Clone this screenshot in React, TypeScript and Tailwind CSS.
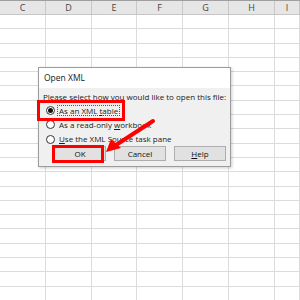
const cols = [
  { label: 'C', w: 'w-[46px]' },
  { label: 'D', w: 'w-[46px]' },
  { label: 'E', w: 'w-[45px]' },
  { label: 'F', w: 'w-[46px]' },
  { label: 'G', w: 'w-[46px]' },
  { label: 'H', w: 'w-[46px]' },
  { label: 'I', w: 'flex-1' },
];

const rows = Array.from({ length: 20 }, (_, i) => i);

const Radio = ({ checked }: { checked?: boolean }) => (
  <span className="w-[9px] h-[9px] rounded-full border border-[#333] bg-white flex items-center justify-center shrink-0">
    {checked && <span className="w-[5px] h-[5px] rounded-full bg-[#111]" />}
  </span>
);

const Button = ({ children }: { children: React.ReactNode }) => (
  <div className="h-[15px] w-[52px] bg-[#e1e1e1] border border-[#adadad] flex items-center justify-center text-[#111]">
    {children}
  </div>
);

export default function App() {
  return (
    <div className="relative w-[300px] h-[300px] overflow-hidden bg-white" style={{ fontFamily: '"Open Sans", "Liberation Sans", sans-serif' }}>
      {/* sheet */}
      <div className="flex flex-col">
        <div className="flex h-[15px] bg-[#e6e6e6] border-t border-t-[#9f9f9f] border-b border-b-[#c6c6c6]">
          {cols.map((c) => (
            <div key={c.label} className={`${c.w} shrink-0 border-r border-[#c8c8c8] flex items-center justify-center text-[9px] text-[#444]`}>
              {c.label}
            </div>
          ))}
        </div>
        {rows.map((r) => (
          <div key={r} className="flex h-[14.3px] border-b border-[#dcdcdc]">
            {cols.map((c) => (
              <div key={c.label} className={`${c.w} shrink-0 border-r border-[#dcdcdc]`} />
            ))}
          </div>
        ))}
      </div>

      {/* dialog */}
      <div className="absolute left-[38px] top-[67px] w-[193px] h-[100px] border border-[#9c9c9c] bg-[#f0f0f0] shadow-[1px_1px_3px_rgba(0,0,0,0.2)] flex flex-col text-[8px] text-[#1a1a1a]">
        <div className="h-[20px] bg-white flex items-center pl-[5px] text-[8.5px]">Open XML</div>
        <div className="flex flex-col pl-[4px] pt-[3px]">
          <div className="h-[12px] flex items-center">Please select how you would like to open this file:</div>
          <div className="flex flex-col gap-[4.5px] pl-[3px] pt-[2px]">
            <div className="flex items-center gap-[2px] h-[10px]">
              <Radio checked />
              <span className="border border-dotted border-[#555] px-[1px] leading-[9px]">As an XML <u>t</u>able</span>
            </div>
            <div className="flex items-center gap-[2px] h-[10px]">
              <Radio />
              <span className="px-[2px]">As a read-only <u>w</u>orkbook</span>
            </div>
            <div className="flex items-center gap-[2px] h-[10px]">
              <Radio />
              <span className="px-[2px]"><u>U</u>se the XML Source task pane</span>
            </div>
          </div>
          <div className="flex gap-[8px] pl-[11px] pt-[2px]">
            <Button>OK</Button>
            <Button>Cancel</Button>
            <Button><span><u>H</u>elp</span></Button>
          </div>
        </div>
      </div>

      {/* annotations */}
      <div className="absolute left-[37px] top-[100px] w-[88px] h-[21px] border-[3.5px] border-[#ff0000]" />
      <div className="absolute left-[52px] top-[145px] w-[52px] h-[18px] border-[3.5px] border-[#ff0000]" />
      <svg className="absolute left-0 top-0" width="300" height="300" viewBox="0 0 300 300">
        <line x1="153" y1="121" x2="116" y2="145" stroke="#ff0000" strokeWidth="4" strokeLinecap="round" />
        <polygon points="106,152 111,139 121,148" fill="#ff0000" />
      </svg>
    </div>
  );
}
